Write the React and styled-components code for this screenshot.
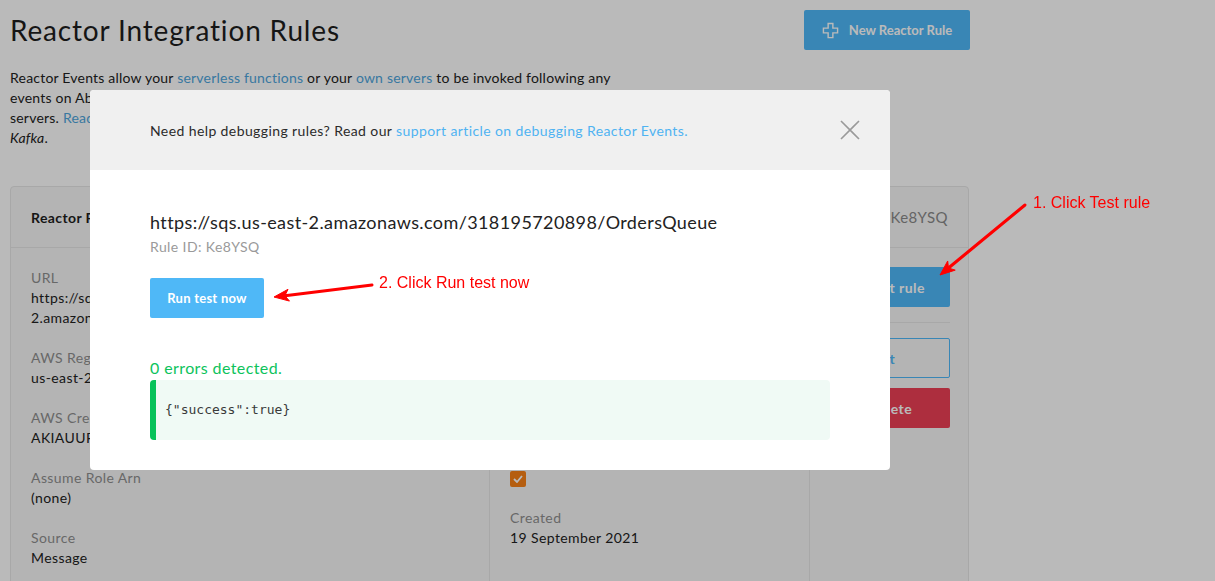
import React from "react";
import styled, { createGlobalStyle } from "styled-components";
import { Play, Pencil, Trash2 } from "lucide-react";

const GlobalStyle = createGlobalStyle`
  body {
    margin: 0;
    background: #ffffff;
    font-family: "Lato", "Open Sans", sans-serif;
    letter-spacing: 0.025em;
    color: #2b2b2b;
  }
`;

const Page = styled.div`
  padding: 10px;
  width: 960px;
`;

const TopBar = styled.div`
  display: flex;
  justify-content: space-between;
  align-items: center;
  height: 40px;
`;

const Title = styled.h1`
  margin: 0;
  font-size: 28px;
  font-weight: 400;
  letter-spacing: 0.03em;
  color: #1e1e1e;
`;

const PrimaryButton = styled.button`
  display: flex;
  align-items: center;
  justify-content: center;
  gap: 10px;
  width: 166px;
  height: 40px;
  padding: 0;
  border: none;
  border-radius: 2px;
  background: #4fb8f9;
  color: #ffffff;
  font-family: inherit;
  font-size: 13px;
  font-weight: 700;
  letter-spacing: 0;
`;

const Intro = styled.p`
  margin: 18px 0 0;
  max-width: 650px;
  font-size: 14px;
  line-height: 20px;
  letter-spacing: 0.015em;
  color: #222;
`;

const Link = styled.a`
  color: #4ea5dc;
  text-decoration: none;
`;

const Card = styled.div`
  margin-top: 38px;
  width: 957px;
  border: 1px solid #e6e6e6;
  border-radius: 4px;
  background: #f7f7f7;
`;

const CardHeader = styled.div`
  display: flex;
  justify-content: space-between;
  align-items: center;
  height: 60px;
  padding: 0 20px;
  border-bottom: 1px solid #e6e6e6;
  font-size: 14px;
`;

const HeaderTitle = styled.span`
  color: #1e1e1e;
  font-weight: 700;
`;

const HeaderMeta = styled.span`
  color: #8a8a8a;
  font-size: 15px;
`;

const CardBody = styled.div`
  display: grid;
  grid-template-columns: 478px 320px 159px;
`;

const Column = styled.div`
  padding: ${(p) => p.$top || "20px"} 20px 40px;
  border-left: ${(p) => (p.$divided ? "1px solid #e6e6e6" : "none")};
  display: flex;
  flex-direction: column;
  gap: ${(p) => p.$gap || "20px"};
`;

const Field = styled.div`
  font-size: 14px;
  line-height: 20px;
`;

const Label = styled.div`
  color: #8f8f8f;
`;

const Value = styled.div`
  color: #222;
  white-space: nowrap;
`;

const Checkbox = styled.span`
  display: inline-flex;
  align-items: center;
  justify-content: center;
  width: 16px;
  height: 16px;
  margin-top: 2px;
  border-radius: 2px;
  background: #f88216;
`;

const SideButton = styled.button`
  display: flex;
  align-items: center;
  gap: 8px;
  height: 40px;
  width: 120px;
  padding: 0 0 0 16px;
  margin-top: ${(p) => p.$shift || "0"};
  border-radius: 2px;
  font-family: inherit;
  font-size: 14px;
  font-weight: 700;
  letter-spacing: 0.03em;
  border: ${(p) => (p.$outline ? "1px solid #4fb8f9" : "none")};
  background: ${(p) => (p.$outline ? "transparent" : p.$bg)};
  color: ${(p) => (p.$outline ? "#4fb8f9" : "#ffffff")};
`;

const Separator = styled.hr`
  margin: 0;
  border: none;
  border-top: 1px solid #e6e6e6;
  width: 120px;
`;

const Overlay = styled.div`
  position: fixed;
  inset: 0;
  background: rgba(0, 0, 0, 0.27);
`;

const Modal = styled.div`
  position: fixed;
  left: 90px;
  top: 90px;
  width: 800px;
  border-radius: 4px;
  background: #ffffff;
  overflow: hidden;
`;

const ModalHeader = styled.div`
  display: flex;
  justify-content: space-between;
  align-items: center;
  height: 80px;
  padding: 0 30px 0 60px;
  background: #f0f0f0;
  font-size: 14px;
  color: #2b2b2b;
`;

const HelpLink = styled.a`
  color: #4fb3f2;
  text-decoration: none;
`;

const CloseButton = styled.button`
  display: flex;
  padding: 0;
  border: none;
  background: none;
`;

const ModalBody = styled.div`
  padding: 40px 60px 30px;
`;

const Endpoint = styled.div`
  font-size: 18px;
  line-height: 24px;
  color: #222;
`;

const RuleId = styled.div`
  margin-top: 4px;
  font-size: 14px;
  line-height: 18px;
  color: #9a9a9a;
`;

const RunButton = styled.button`
  margin-top: 22px;
  height: 40px;
  width: 114px;
  border: none;
  border-radius: 2px;
  background: #4fb8f7;
  color: #ffffff;
  font-family: inherit;
  font-size: 13px;
  font-weight: 700;
  letter-spacing: 0.02em;
`;

const Result = styled.div`
  margin-top: 40px;
  font-size: 16px;
  line-height: 20px;
  color: #0dc35c;
`;

const CodeBox = styled.pre`
  margin: 2px 0 0;
  padding: 21px 9px;
  border-left: 6px solid #08c25a;
  border-radius: 4px;
  background: #f0faf5;
  font-family: "DejaVu Sans Mono", monospace;
  font-size: 13px;
  line-height: 18px;
  letter-spacing: 0;
  color: #3a3a3a;
`;

const Annotation = styled.span`
  position: fixed;
  left: ${(p) => p.$x}px;
  top: ${(p) => p.$y}px;
  font-family: "Liberation Sans", Arial, sans-serif;
  font-size: 16px;
  letter-spacing: 0;
  color: #ff0000;
  white-space: nowrap;
`;

const ArrowLayer = styled.svg`
  position: fixed;
  left: 0;
  top: 0;
  pointer-events: none;
`;

const PlusIcon = () => (
  <svg width="17" height="17" viewBox="0 0 18 18" fill="none">
    <path
      d="M6.5 1.5h5v5h5v5h-5v5h-5v-5h-5v-5h5z"
      stroke="#ffffff"
      strokeWidth="1.5"
    />
  </svg>
);

const CloseIcon = () => (
  <svg width="20" height="20" viewBox="0 0 20 20">
    <path d="M1 1L19 19M19 1L1 19" stroke="#9a9a9a" strokeWidth="1.6" />
  </svg>
);

const Arrow = ({ x1, y1, x2, y2 }) => {
  const angle = Math.atan2(y2 - y1, x2 - x1);
  const len = 16;
  const spread = 0.38;
  const a = [x2 - len * Math.cos(angle - spread), y2 - len * Math.sin(angle - spread)];
  const b = [x2 - len * Math.cos(angle + spread), y2 - len * Math.sin(angle + spread)];
  const bx = x2 - 11 * Math.cos(angle);
  const by = y2 - 11 * Math.sin(angle);
  return (
    <g fill="#ff0000" stroke="#ff0000">
      <line x1={x1} y1={y1} x2={bx} y2={by} strokeWidth="3" strokeLinecap="round" />
      <polygon points={`${x2},${y2} ${a[0]},${a[1]} ${bx},${by} ${b[0]},${b[1]}`} strokeWidth="1" />
    </g>
  );
};

// values are listed line by line, as the rule card wraps them
const leftFields = [
  { label: "URL", lines: ["https://sqs.us-east-", "2.amazonaws.com/318195720898/OrdersQueue"] },
  { label: "AWS Region", lines: ["us-east-2"] },
  { label: "AWS Credentials", lines: ["AKIAUUFXQ2ZL3EXAMPLE:••••••••"] },
  { label: "Assume Role Arn", lines: ["(none)"] },
  { label: "Source", lines: ["Message"] },
];

const middleFields = [
  { label: "Type", lines: ["Amazon SQS"] },
  { label: "Status", lines: ["Enabled"] },
  { label: "Encoding", lines: ["JSON"] },
];

const FieldItem = ({ label, lines }) => (
  <Field>
    <Label>{label}</Label>
    {lines.map((line) => (
      <Value key={line}>{line}</Value>
    ))}
  </Field>
);

export default function App() {
  return (
    <>
      <GlobalStyle />
      <Page>
        <TopBar>
          <Title>Reactor Integration Rules</Title>
          <PrimaryButton>
            <PlusIcon />
            New Reactor Rule
          </PrimaryButton>
        </TopBar>
        <Intro>
          Reactor Events allow your <Link>serverless functions</Link> or your{" "}
          <Link>own servers</Link> to be invoked following any
          <br />
          events on Ably, such as messages or presence events on channels, sent to your own
          <br />
          servers. <Link>Read more about Reactor Events</Link>, or stream into AMQP, SQS or
          <br />
          <em>Kafka</em>.
        </Intro>

        <Card>
          <CardHeader>
            <HeaderTitle>Reactor Rule: Amazon SQS</HeaderTitle>
            <HeaderMeta>Rule ID: Ke8YSQ</HeaderMeta>
          </CardHeader>
          <CardBody>
            <Column>
              {leftFields.map((f) => (
                <FieldItem key={f.label} {...f} />
              ))}
            </Column>
            <Column $divided>
              {middleFields.map((f) => (
                <FieldItem key={f.label} {...f} />
              ))}
              <Field>
                <Label>Enveloped</Label>
                <Checkbox>
                  <svg width="10" height="8" viewBox="0 0 10 8">
                    <path d="M1 4l3 3 5-6" stroke="#fff" strokeWidth="1.8" fill="none" />
                  </svg>
                </Checkbox>
              </Field>
              <FieldItem label="Created" lines={["19 September 2021"]} />
            </Column>
            <Column $divided $gap="15px" $top="19px">
              <SideButton $bg="#4fb8f9">
                <Play size={14} />
                Test rule
              </SideButton>
              <Separator />
              <SideButton $outline>
                <Pencil size={14} />
                Edit
              </SideButton>
              <SideButton $bg="#ed4056" $shift="-5px">
                <Trash2 size={14} />
                Delete
              </SideButton>
            </Column>
          </CardBody>
        </Card>
      </Page>

      <Overlay />

      <Modal>
        <ModalHeader>
          <span>
            Need help debugging rules? Read our{" "}
            <HelpLink>support article on debugging Reactor Events.</HelpLink>
          </span>
          <CloseButton>
            <CloseIcon />
          </CloseButton>
        </ModalHeader>
        <ModalBody>
          <Endpoint>https://sqs.us-east-2.amazonaws.com/318195720898/OrdersQueue</Endpoint>
          <RuleId>Rule ID: Ke8YSQ</RuleId>
          <RunButton>Run test now</RunButton>
          <Result>0 errors detected.</Result>
          <CodeBox>{'{"success":true}'}</CodeBox>
        </ModalBody>
      </Modal>

      <Annotation $x={1033} $y={194}>1. Click Test rule</Annotation>
      <Annotation $x={379} $y={274}>2. Click Run test now</Annotation>
      <ArrowLayer width="1215" height="581">
        <Arrow x1={1025} y1={205} x2={940} y2={275} />
        <Arrow x1={372} y1={285} x2={274} y2={297} />
      </ArrowLayer>
    </>
  );
}
